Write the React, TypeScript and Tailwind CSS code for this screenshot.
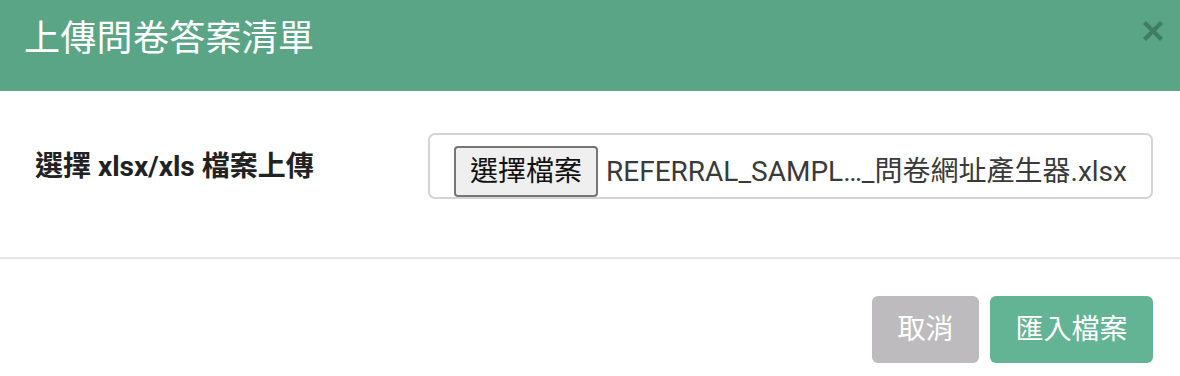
export default function App() {
  const font = { fontFamily: "Roboto, 'Noto Sans CJK TC', sans-serif" };
  return (
    <div className="w-[1180px] h-[376px] bg-white overflow-hidden" style={font}>
      <div className="h-[91px] bg-[#5ba587] flex items-center justify-between pl-[24px] pr-[17px]">
        <h1 className="text-[36px] leading-none text-white font-normal pb-[14px] tracking-[0.3px]">
          上傳問卷答案清單
        </h1>
        <button className="w-[20px] h-[20px] mb-[30px]" aria-label="close">
          <svg viewBox="0 0 20 20" className="w-[20px] h-[20px]">
            <path d="M3 3 L17 17 M17 3 L3 17" stroke="#3f7c61" strokeWidth="4.2" strokeLinecap="square" />
          </svg>
        </button>
      </div>
      <div className="h-[166px] flex items-center pl-[35px] pr-[27px] pb-[16px]">
        <label className="w-[393px] text-[28px] font-bold text-[#222] pt-[2px]">選擇 xlsx/xls 檔案上傳</label>
        <div className="flex-1 h-[66px] border-2 border-[#d4d4d4] rounded-[7px] flex items-end pl-[24px]">
          <button className="h-[51px] px-[14px] bg-[#efefef] border-2 border-[#767676] rounded-[4px] text-[28px] text-[#111] leading-none">
            選擇檔案
          </button>
          <span className="ml-[8px] h-[51px] flex items-center text-[28px] text-[#3a3a3a] leading-none whitespace-nowrap">
            REFERRAL_SAMPL…_問卷網址產生器.xlsx
          </span>
        </div>
      </div>
      <div className="h-[2px] bg-[#e6e6e6]" />
      <div className="flex justify-end gap-[11px] pt-[37px] pr-[27px]">
        <button className="w-[107px] h-[67px] rounded-[6px] bg-[#bdbbbe] text-white text-[28px]">取消</button>
        <button className="w-[163px] h-[67px] rounded-[6px] bg-[#62b495] text-white text-[28px]">匯入檔案</button>
      </div>
    </div>
  );
}
